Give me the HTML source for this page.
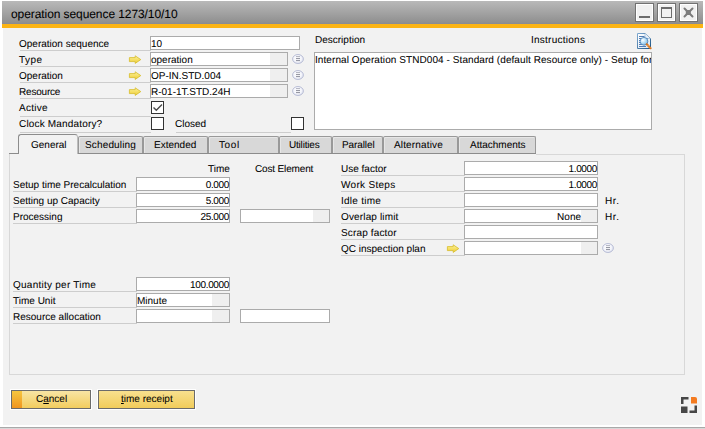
<!DOCTYPE html>
<html><head><meta charset="utf-8">
<style>
*{margin:0;padding:0;box-sizing:border-box}
html,body{width:705px;height:429px;overflow:hidden;background:#fff}
body{position:relative;font-family:"Liberation Sans",sans-serif;font-size:10px;color:#000;text-rendering:geometricPrecision;-webkit-text-stroke:0.05px #000}
.a{position:absolute}
.t{position:absolute;white-space:nowrap;line-height:12px;height:12px;margin-top:1px}
.in .t{top:1px!important}
.n{letter-spacing:-0.35px}
.ul{position:absolute;height:1px;background:#cdcdcd}
.in{position:absolute;height:14px;border:1px solid #ababab;background:#fff}
.gz{position:absolute;top:0;bottom:0;right:0;background:#efefef}
.cb{position:absolute;width:13px;height:13px;border:1px solid #333;background:#fff}
.tab{position:absolute;top:136px;height:17px;background:#d8d8d8;border:1px solid #999;border-bottom:none;border-radius:2px 2px 0 0;box-shadow:inset 1px 1px 0 #e6e6e6}
.tabt{position:absolute;top:140px;white-space:nowrap;line-height:12px}
</style></head><body>
<svg width="0" height="0" style="position:absolute"><defs><radialGradient id="cg" cx="0.45" cy="0.45" r="0.6"><stop offset="0" stop-color="#ffffff"/><stop offset="0.6" stop-color="#f4f5fb"/><stop offset="1" stop-color="#d5d9ea"/></radialGradient><linearGradient id="ag" x1="0" y1="0" x2="0" y2="1"><stop offset="0" stop-color="#fbf1a6"/><stop offset="0.5" stop-color="#f6e065"/><stop offset="1" stop-color="#ecc834"/></linearGradient></defs></svg>
<!-- title bar -->
<div class="a" style="left:2px;top:1px;width:701px;height:23px;background:linear-gradient(#b9b9b9,#8d8d8d)"></div>
<div class="a" style="left:2px;top:23px;width:701px;height:1px;background:#8a8c93"></div>
<div class="a" style="left:2px;top:24px;width:701px;height:4px;background:#fbb415"></div>
<div class="t" style="left:11px;top:6px;font-size:12px;line-height:14px;height:14px;color:#000;letter-spacing:-0.08px">operation sequence 1273/10/10</div>
<!-- title buttons -->
<div class="a" style="left:635px;top:3px;width:19px;height:19px;border:1px solid #727272;background:#f1f1f1;box-shadow:inset 0 0 0 1px #fff"></div>
<div class="a" style="left:639px;top:16px;width:11px;height:2px;background:#6c6c6c"></div>
<div class="a" style="left:657px;top:3px;width:19px;height:19px;border:1px solid #727272;background:#f1f1f1;box-shadow:inset 0 0 0 1px #fff"></div>
<div class="a" style="left:661px;top:7px;width:11px;height:11px;border:1px solid #6c6c6c;border-top-width:2px"></div>
<div class="a" style="left:679px;top:3px;width:19px;height:19px;border:1px solid #727272;background:#f1f1f1;box-shadow:inset 0 0 0 1px #fff"></div>
<svg class="a" style="left:679px;top:3px" width="19" height="19"><path d="M5.5 5.5 L13.5 13.5 M13.5 5.5 L5.5 13.5" stroke="#7c7c7c" stroke-width="2" stroke-linecap="round"/><rect x="6.8" y="7" width="5" height="5" fill="#7c7c7c"/></svg>
<!-- body -->
<div class="a" style="left:3px;top:28px;width:699px;height:397px;background:#f2f2f2"></div>
<div class="a" style="left:0;top:427px;width:705px;height:1px;background:#a9a9a9"></div>
<div class="a" style="left:0;top:428px;width:705px;height:1px;background:#d8d8d8"></div>

<!-- header labels -->
<div class="t" style="left:19px;top:38px">Operation sequence</div><div class="ul" style="left:20px;top:50px;width:131px"></div>
<div class="t" style="left:19px;top:54px;letter-spacing:0.5px">Type</div><div class="ul" style="left:20px;top:66px;width:131px"></div>
<div class="t" style="left:19px;top:70px">Operation</div><div class="ul" style="left:20px;top:82px;width:131px"></div>
<div class="t" style="left:19px;top:86px;letter-spacing:-0.2px">Resource</div><div class="ul" style="left:20px;top:98px;width:131px"></div>
<div class="t" style="left:19px;top:102px;letter-spacing:0.25px">Active</div><div class="ul" style="left:20px;top:116px;width:131px"></div>
<div class="t" style="left:19px;top:118px;letter-spacing:0.17px">Clock Mandatory?</div><div class="ul" style="left:20px;top:132px;width:131px"></div>
<div class="t" style="left:175px;top:118px">Closed</div><div class="ul" style="left:176px;top:132px;width:115px"></div>

<!-- arrows -->
<svg class="a" style="left:128px;top:54px" width="14" height="11"><path d="M1.4 3.6 H7.2 V1.8 L12.8 5.6 L7.2 9.4 V7.6 H1.4 Z" fill="url(#ag)" stroke="#d6bc2a" stroke-width="0.8" stroke-linejoin="round"/></svg>
<svg class="a" style="left:128px;top:70px" width="14" height="11"><path d="M1.4 3.6 H7.2 V1.8 L12.8 5.6 L7.2 9.4 V7.6 H1.4 Z" fill="url(#ag)" stroke="#d6bc2a" stroke-width="0.8" stroke-linejoin="round"/></svg>
<svg class="a" style="left:128px;top:86px" width="14" height="11"><path d="M1.4 3.6 H7.2 V1.8 L12.8 5.6 L7.2 9.4 V7.6 H1.4 Z" fill="url(#ag)" stroke="#d6bc2a" stroke-width="0.8" stroke-linejoin="round"/></svg>

<!-- header inputs -->
<div class="in" style="left:150px;top:36px;width:150px"><div class="t" style="left:0px;top:0">10</div></div>
<div class="in" style="left:150px;top:52px;width:138px"><div class="gz" style="width:17px"></div><div class="t" style="left:0px;top:0">operation</div></div>
<div class="in" style="left:150px;top:68px;width:138px"><div class="gz" style="width:17px"></div><div class="t" style="left:0px;top:0">OP-IN.STD.004</div></div>
<div class="in" style="left:150px;top:84px;width:138px"><div class="gz" style="width:17px"></div><div class="t" style="left:0px;top:0">R-01-1T.STD.24H</div></div>
<div class="cb" style="left:151px;top:101px"></div>
<svg class="a" style="left:151px;top:101px" width="13" height="13"><path d="M2.5 6.5 L5.3 9.3 L11 3.5" fill="none" stroke="#4a4a4a" stroke-width="1.4"/></svg>
<div class="cb" style="left:151px;top:117px"></div>
<div class="cb" style="left:291px;top:117px"></div>

<!-- list icons -->
<svg class="a" style="left:292px;top:54px" width="12" height="10"><ellipse cx="6" cy="5" rx="5.4" ry="4.5" fill="url(#cg)" stroke="#b4bad2" stroke-width="0.9"/><path d="M4 2.6h4" stroke="#a6a9b6" stroke-width="0.9"/><path d="M4 4.6h4M4 6.6h4" stroke="#808391" stroke-width="0.9"/></svg>
<svg class="a" style="left:292px;top:70px" width="12" height="10"><ellipse cx="6" cy="5" rx="5.4" ry="4.5" fill="url(#cg)" stroke="#b4bad2" stroke-width="0.9"/><path d="M4 2.6h4" stroke="#a6a9b6" stroke-width="0.9"/><path d="M4 4.6h4M4 6.6h4" stroke="#808391" stroke-width="0.9"/></svg>
<svg class="a" style="left:292px;top:86px" width="12" height="10"><ellipse cx="6" cy="5" rx="5.4" ry="4.5" fill="url(#cg)" stroke="#b4bad2" stroke-width="0.9"/><path d="M4 2.6h4" stroke="#a6a9b6" stroke-width="0.9"/><path d="M4 4.6h4M4 6.6h4" stroke="#808391" stroke-width="0.9"/></svg>

<!-- description -->
<div class="t" style="left:315px;top:34px">Description</div>
<div class="t" style="left:531px;top:34px;letter-spacing:0.25px">Instructions</div>
<div class="in" style="left:314px;top:52px;width:338px;height:78px;overflow:hidden"><div class="t" style="left:0px;top:4px;letter-spacing:0.075px">Internal Operation STND004 - Standard (default Resource only) - Setup for</div></div>
<svg class="a" style="left:636px;top:32px" width="17" height="18">
<defs><linearGradient id="dg" x1="0" y1="0" x2="1" y2="1"><stop offset="0" stop-color="#ffffff"/><stop offset="1" stop-color="#d8e6f2"/></linearGradient>
<linearGradient id="db" x1="0" y1="0" x2="1" y2="1"><stop offset="0" stop-color="#7fa8cf"/><stop offset="1" stop-color="#1d5586"/></linearGradient>
<radialGradient id="lg" cx="0.35" cy="0.35" r="0.7"><stop offset="0" stop-color="#ffffff"/><stop offset="0.5" stop-color="#b9e0f7"/><stop offset="1" stop-color="#7fb8e0"/></radialGradient></defs>
<path d="M1.5 1.5 H9 L14.5 6.5 V16.5 H1.5 Z" fill="url(#dg)" stroke="url(#db)"/>
<path d="M9 1.5 V6.5 H14.5" fill="#e8f0f8" stroke="#8fb0d0" stroke-width="0.6"/>
<path d="M3 4.5h5.5M3 6.5h8.5M3 8.5h8.5M3 10.5h8.5M3 12.5h8.5M3 14.5h7" stroke="#3f6fae" stroke-width="0.9"/>
<circle cx="8" cy="9.3" r="3.9" fill="url(#lg)" stroke="#4d7fb5" stroke-width="0.8"/>
<path d="M10.8 12.3 L14.6 16.2" stroke="#d9731a" stroke-width="2.1" stroke-linecap="round"/>
<path d="M11.5 13 L12.3 13.8 M13.2 14.7 L14 15.5" stroke="#f6d7a0" stroke-width="0.8"/>
</svg>

<!-- tabs -->
<div class="a" style="left:536px;top:154px;width:149px;height:1px;background:#d8d8d8"></div>
<div class="tab" style="left:78px;width:65px"></div>
<div class="tab" style="left:143px;width:65px"></div>
<div class="tab" style="left:208px;width:71px"></div>
<div class="tab" style="left:279px;width:53px"></div>
<div class="tab" style="left:332px;width:51px"></div>
<div class="tab" style="left:383px;width:75px"></div>
<div class="tab" style="left:458px;width:78px"></div>
<div class="a" style="left:18px;top:134px;width:60px;height:20px;background:#f2f2f2;border:1px solid #8c8c8c;border-right-color:#bdbdbd;border-bottom:none;border-radius:3px 3px 0 0"></div>
<div class="a" style="left:9px;top:153px;width:10px;height:1px;background:#8c8c8c"></div>
<div class="a" style="left:78px;top:153px;width:458px;height:1px;background:#8c8c8c"></div>
<div class="tabt" style="left:31px">General</div>
<div class="tabt" style="left:85px;letter-spacing:0.15px">Scheduling</div>
<div class="tabt" style="left:154px">Extended</div>
<div class="tabt" style="left:219px;letter-spacing:0.6px">Tool</div>
<div class="tabt" style="left:289px;letter-spacing:-0.2px">Utilities</div>
<div class="tabt" style="left:342px;letter-spacing:-0.1px">Parallel</div>
<div class="tabt" style="left:394px;letter-spacing:0.15px">Alternative</div>
<div class="tabt" style="left:470px">Attachments</div>

<!-- panel -->
<div class="a" style="left:9px;top:154px;width:1px;height:221px;background:#d8d8d8"></div>
<div class="a" style="left:684px;top:154px;width:1px;height:221px;background:#d8d8d8"></div>
<div class="a" style="left:9px;top:374px;width:676px;height:1px;background:#d8d8d8"></div>

<div class="t" style="left:208px;top:163px">Time</div>
<div class="t" style="left:255px;top:163px;letter-spacing:-0.15px">Cost Element</div>

<div class="t" style="left:13px;top:179px">Setup time Precalculation</div><div class="ul" style="left:13px;top:191px;width:124px"></div>
<div class="t" style="left:13px;top:195px">Setting up Capacity</div><div class="ul" style="left:13px;top:207px;width:124px"></div>
<div class="t" style="left:13px;top:211px">Processing</div><div class="ul" style="left:13px;top:223px;width:124px"></div>
<div class="in" style="left:136px;top:177px;width:94px"><div class="t n" style="right:0;top:0">0.000</div></div>
<div class="in" style="left:136px;top:193px;width:94px"><div class="t n" style="right:0;top:0">5.000</div></div>
<div class="in" style="left:136px;top:209px;width:94px"><div class="t n" style="right:0;top:0">25.000</div></div>
<div class="in" style="left:240px;top:209px;width:90px"><div class="gz" style="width:16px"></div></div>

<div class="t" style="left:13px;top:279px;letter-spacing:0.25px">Quantity per Time</div><div class="ul" style="left:13px;top:291px;width:124px"></div>
<div class="t" style="left:13px;top:295px">Time Unit</div><div class="ul" style="left:13px;top:307px;width:124px"></div>
<div class="t" style="left:13px;top:311px">Resource allocation</div><div class="ul" style="left:13px;top:323px;width:124px"></div>
<div class="in" style="left:136px;top:277px;width:94px"><div class="t n" style="right:0;top:0">100.0000</div></div>
<div class="in" style="left:136px;top:293px;width:94px"><div class="gz" style="width:17px"></div><div class="t" style="left:0px;top:0">Minute</div></div>
<div class="in" style="left:136px;top:309px;width:94px"><div class="gz" style="width:17px"></div></div>
<div class="in" style="left:240px;top:309px;width:90px"></div>

<div class="t" style="left:341px;top:163px">Use factor</div><div class="ul" style="left:341px;top:175px;width:124px"></div>
<div class="t" style="left:341px;top:179px;letter-spacing:0.3px">Work Steps</div><div class="ul" style="left:341px;top:191px;width:124px"></div>
<div class="t" style="left:341px;top:195px;letter-spacing:0.25px">Idle time</div><div class="ul" style="left:341px;top:207px;width:124px"></div>
<div class="t" style="left:341px;top:211px;letter-spacing:0.15px">Overlap limit</div><div class="ul" style="left:341px;top:223px;width:124px"></div>
<div class="t" style="left:341px;top:227px;letter-spacing:0.15px">Scrap factor</div><div class="ul" style="left:341px;top:239px;width:124px"></div>
<div class="t" style="left:341px;top:243px">QC inspection plan</div><div class="ul" style="left:341px;top:255px;width:124px"></div>
<svg class="a" style="left:446px;top:243px" width="14" height="11"><path d="M1.4 3.6 H7.2 V1.8 L12.8 5.6 L7.2 9.4 V7.6 H1.4 Z" fill="url(#ag)" stroke="#d6bc2a" stroke-width="0.8" stroke-linejoin="round"/></svg>
<div class="in" style="left:464px;top:161px;width:134px"><div class="t n" style="right:0;top:0">1.0000</div></div>
<div class="in" style="left:464px;top:177px;width:134px"><div class="t n" style="right:0;top:0">1.0000</div></div>
<div class="in" style="left:464px;top:193px;width:134px"></div>
<div class="in" style="left:464px;top:209px;width:134px"><div class="gz" style="width:16px"></div><div class="t" style="right:16px;top:0">None</div></div>
<div class="in" style="left:464px;top:225px;width:134px"></div>
<div class="in" style="left:464px;top:241px;width:134px"><div class="gz" style="width:16px"></div></div>
<div class="t" style="left:605px;top:195px;letter-spacing:0.6px">Hr.</div>
<div class="t" style="left:605px;top:211px;letter-spacing:0.6px">Hr.</div>
<svg class="a" style="left:602px;top:243px" width="12" height="10"><ellipse cx="6" cy="5" rx="5.4" ry="4.5" fill="url(#cg)" stroke="#b4bad2" stroke-width="0.9"/><path d="M4 2.6h4" stroke="#a6a9b6" stroke-width="0.9"/><path d="M4 4.6h4M4 6.6h4" stroke="#808391" stroke-width="0.9"/></svg>

<!-- buttons -->
<div class="a" style="left:10px;top:389px;width:82px;height:21px;background:#fff"></div>
<div class="a" style="left:11px;top:390px;width:80px;height:19px;border:1px solid #6b6b6b;background:linear-gradient(#f8e4a4,#f2cd5e)"></div>
<div class="a" style="left:12px;top:391px;width:10px;height:17px;background:linear-gradient(#f6c640,#ef9520)"></div>
<div class="t" style="left:36px;top:393px">C<span style="text-decoration:underline">a</span>ncel</div>
<div class="a" style="left:97px;top:389px;width:99px;height:21px;background:#fff"></div>
<div class="a" style="left:98px;top:390px;width:97px;height:19px;border:1px solid #6b6b6b;background:linear-gradient(#f8e08e,#f1cc5a)"></div>
<div class="t" style="left:121px;top:393px"><span style="text-decoration:underline">t</span>ime receipt</div>

<!-- bottom right icon -->
<svg class="a" style="left:681px;top:397px" width="16" height="16">
<path d="M0 0 H7.5 V2.5 H2.5 V7 H0 Z" fill="#474747"/>
<path d="M10 0 H14 Q16 0 16 2 V6.5 H10 Z" fill="#f47b20"/>
<rect x="0" y="9.5" width="6.5" height="6.5" fill="#474747"/>
<path d="M13.5 8.5 H16 V16 H8.5 V13.5 H13.5 Z" fill="#474747"/>
</svg>
</body></html>
